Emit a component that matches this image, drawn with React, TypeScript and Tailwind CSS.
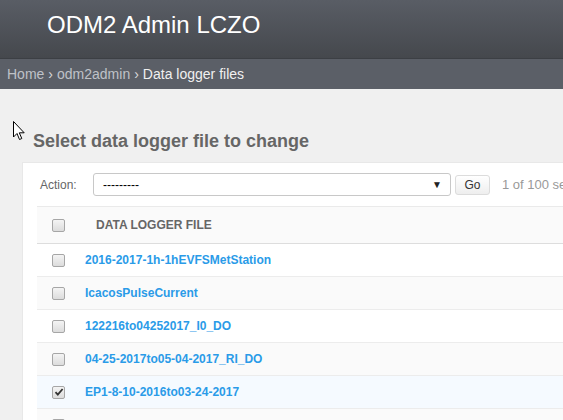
import React from "react";

const rows = [
  { name: "2016-2017-1h-1hEVFSMetStation", checked: false },
  { name: "IcacosPulseCurrent", checked: false },
  { name: "122216to04252017_I0_DO", checked: false },
  { name: "04-25-2017to05-04-2017_RI_DO", checked: false },
  { name: "EP1-8-10-2016to03-24-2017", checked: true },
  { name: "", checked: false },
];

function Checkbox({ checked }: { checked: boolean }) {
  return (
    <div className="w-[13px] h-[13px] rounded-[2px] border border-[#a6a6a6] bg-gradient-to-b from-[#f4f4f4] to-[#dcdcdc] flex items-center justify-center">
      {checked && (
        <svg width="10" height="10" viewBox="0 0 10 10">
          <path d="M1.5 5.2 L3.8 7.6 L8.6 2" fill="none" stroke="#333" strokeWidth="1.8" />
        </svg>
      )}
    </div>
  );
}

export default function App() {
  return (
    <div
      className="w-[563px] h-[420px] overflow-hidden relative bg-[#f0f0f0]"
      style={{ fontFamily: '"Liberation Sans", Arial, sans-serif' }}
    >
      <div className="h-[59px] bg-gradient-to-b from-[#595d65] to-[#45484d] border-b border-[#3c3f44] pl-[47px] flex items-center">
        <div className="text-white text-[24px] leading-none -mt-[9px]">ODM2 Admin LCZO</div>
      </div>
      <div className="h-[30px] bg-[#5b5f67] pl-[7px] flex items-center text-[14px] text-[#bfc2c7]">
        <span>Home</span>
        <span className="mx-[4px] text-[#d9d9d9]">›</span>
        <span>odm2admin</span>
        <span className="mx-[4px] text-[#d9d9d9]">›</span>
        <span className="text-[#f0f0f0]">Data logger files</span>
      </div>
      <div className="pt-[41px]">
        <h1 className="pl-[33px] text-[18px] leading-[22px] font-bold text-[#666666]">
          Select data logger file to change
        </h1>
        <div className="mt-[10px] ml-[22px] bg-white border-l border-t border-[#e8e8e8] pl-[14px] pt-[10px]">
          <div className="flex items-center h-[23px] mb-[10px]">
            <span className="shrink-0 pl-[3px] w-[56px] text-[12px] text-[#666666]">Action:</span>
            <div className="shrink-0 w-[358px] h-[23px] border border-[#c8c8c8] rounded-[3px] flex items-center pl-[9px] pr-[8px] justify-between">
              <span className="text-[12px] text-black">---------</span>
              <span className="text-[10px] text-[#222]">▼</span>
            </div>
            <div className="shrink-0 ml-[4px] w-[35px] h-[20px] border border-[#dcdcdc] rounded-[3px] bg-gradient-to-b from-[#ffffff] to-[#eeeeee] flex items-center justify-center text-[12px] text-[#333]">
              Go
            </div>
            <span className="shrink-0 ml-[12px] text-[13px] text-[#999999] whitespace-nowrap">1 of 100 selected</span>
          </div>
          <div className="border-t border-[#eaeaea]">
            <div className="h-[37px] bg-[#fafafa] border-b border-[#dddddd] flex items-center">
              <div className="w-[48px] pl-[15px]">
                <Checkbox checked={false} />
              </div>
              <span className="pl-[11px] text-[12px] font-bold text-[#666666]">DATA LOGGER FILE</span>
            </div>
            {rows.map((r, i) => (
              <div
                key={i}
                className={`h-[33px] border-b border-[#ececec] flex items-center ${
                  r.checked ? "bg-[#f5faff]" : i % 2 === 0 ? "bg-white" : "bg-[#fafafa]"
                }`}
              >
                <div className="w-[48px] pl-[15px]">
                  <Checkbox checked={r.checked} />
                </div>
                <span className="text-[12px] font-bold text-[#2a9be8]">{r.name}</span>
              </div>
            ))}
          </div>
        </div>
      </div>
      <svg className="absolute left-[13px] top-[121px]" width="13" height="20" viewBox="0 0 13 20">
        <path d="M0.5 0.5 L0.5 16 L4 12.5 L6.5 18.5 L8.8 17.5 L6.3 11.8 L11.2 11.8 Z" fill="white" stroke="black" strokeWidth="1" strokeLinejoin="miter" />
      </svg>
    </div>
  );
}
